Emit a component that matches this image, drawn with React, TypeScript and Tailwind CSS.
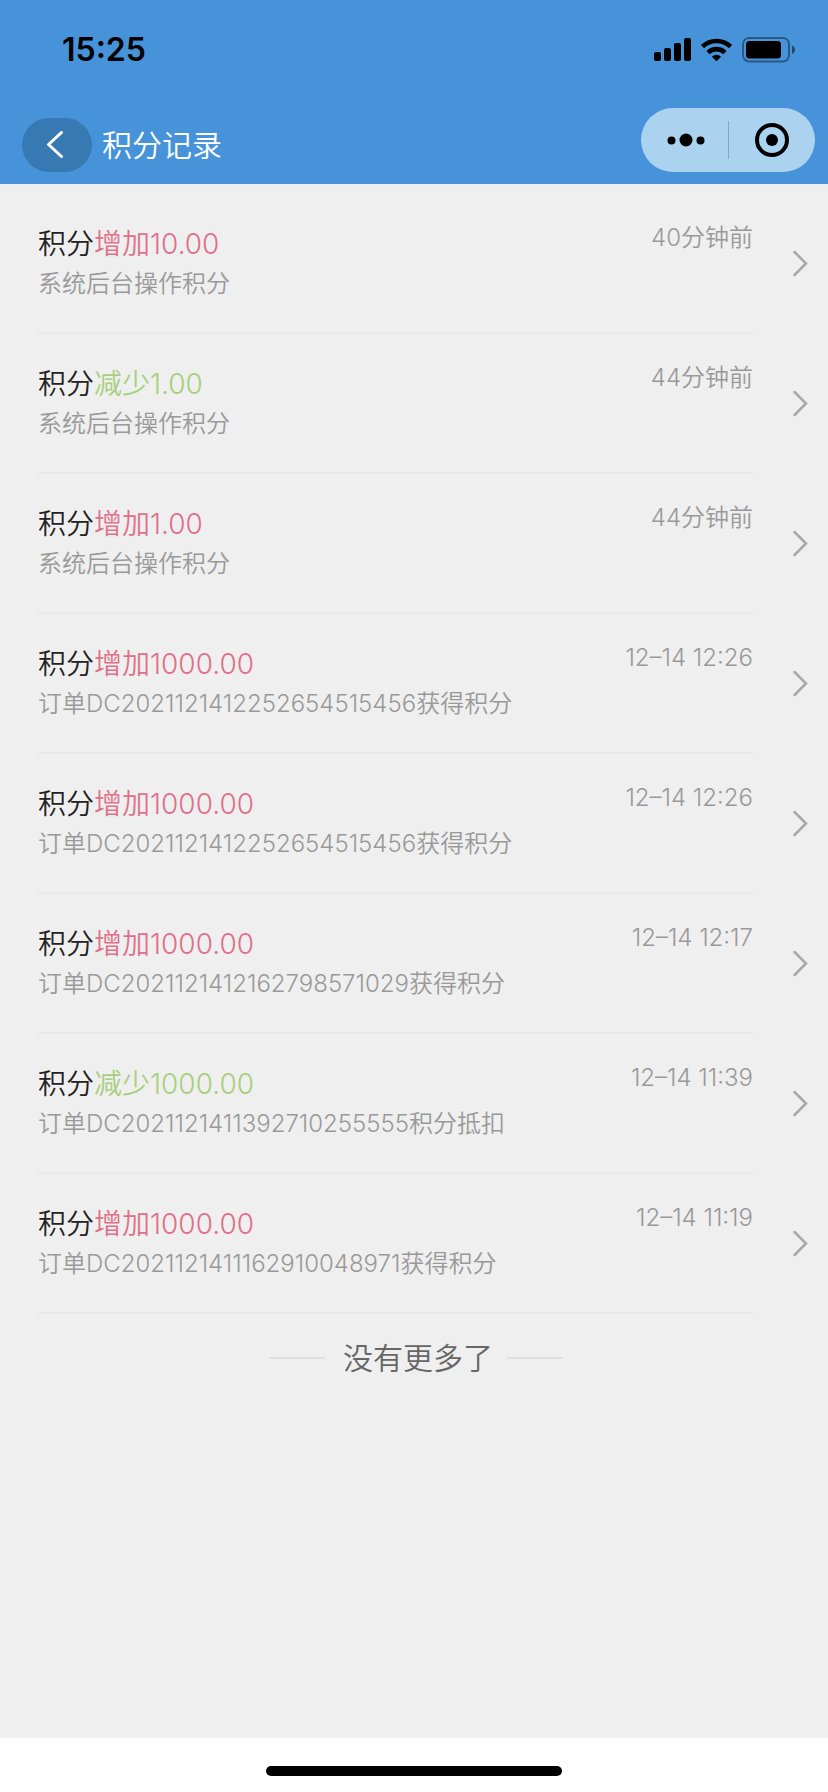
type PointRecord = {
    id: number;
    type: 'add' | 'sub';
    amount: string;
    remark: string;
    time: string;
};

const records: PointRecord[] = [
    { id: 1, type: 'add', amount: '10.00', remark: '系统后台操作积分', time: '40分钟前' },
    { id: 2, type: 'sub', amount: '1.00', remark: '系统后台操作积分', time: '44分钟前' },
    { id: 3, type: 'add', amount: '1.00', remark: '系统后台操作积分', time: '44分钟前' },
    { id: 4, type: 'add', amount: '1000.00', remark: '订单DC2021121412252654515456获得积分', time: '12–14 12:26' },
    { id: 5, type: 'add', amount: '1000.00', remark: '订单DC2021121412252654515456获得积分', time: '12–14 12:26' },
    { id: 6, type: 'add', amount: '1000.00', remark: '订单DC2021121412162798571029获得积分', time: '12–14 12:17' },
    { id: 7, type: 'sub', amount: '1000.00', remark: '订单DC2021121411392710255555积分抵扣', time: '12–14 11:39' },
    { id: 8, type: 'add', amount: '1000.00', remark: '订单DC2021121411162910048971获得积分', time: '12–14 11:19' },
];

const StatusBar = () => {
    return (
        <div className="flex h-[100px] items-center justify-between pr-[33px] pl-[62px] text-black">
            <span className="text-[32px] leading-8 font-semibold">15:25</span>
            <div className="flex items-center gap-[10px]">
                <svg width="37" height="24" viewBox="0 0 37 24" fill="currentColor">
                    <rect x="0" y="14" width="7" height="9" rx="2" />
                    <rect x="10" y="10" width="7" height="13" rx="2" />
                    <rect x="20" y="5" width="7" height="18" rx="2" />
                    <rect x="30" y="0" width="7" height="23" rx="2" />
                </svg>
                <svg width="31" height="24" viewBox="0 0 31 24" fill="none" stroke="currentColor" strokeWidth="4.6">
                    <path d="M1.5 8.6a20.3 20.3 0 0 1 28 0" />
                    <path d="M7 14.6a12.2 12.2 0 0 1 17 0" />
                    <path d="M15.5 23.2l-4.6-4.5a6.6 6.6 0 0 1 9.2 0z" fill="currentColor" stroke="none" />
                </svg>
                <svg width="53" height="26" viewBox="0 0 53 26" fill="currentColor">
                    <rect x="1" y="1" width="46" height="23.5" rx="6" fill="none" stroke="currentColor" strokeWidth="2" opacity="0.4" />
                    <rect x="4" y="4" width="35" height="17.5" rx="3.5" />
                    <path d="M50 8.5c2 .8 3 2.4 3 4.2s-1 3.4-3 4.2z" opacity="0.5" />
                </svg>
            </div>
        </div>
    );
};

const NavBar = () => {
    return (
        <div className="flex items-end justify-between pt-2 pr-[13px] pb-3 pl-[22px]">
            <div className="flex items-center gap-[10px]">
                <button type="button" aria-label="返回" className="flex h-[54px] w-[70px] items-center justify-center rounded-full bg-[#3679b3]">
                    <svg className="mr-4 ml-3" width="18" height="28" viewBox="0 0 18 28" fill="none" stroke="white" strokeWidth="3" strokeLinecap="round" strokeLinejoin="round">
                        <path d="M15.5 1.5L2.5 13.5l13 12" />
                    </svg>
                </button>
                <h1 className="text-[30px] leading-[54px] font-[350] text-white">积分记录</h1>
            </div>

            {/* 右上角胶囊 */}
            <div className="flex h-16 w-[174px] items-center rounded-full bg-[#abd3f0]">
                <button type="button" aria-label="更多" className="flex w-1/2 items-center justify-center pl-1">
                    <svg width="38" height="14" viewBox="0 0 38 14" fill="black">
                        <circle cx="4.5" cy="7.5" r="4" />
                        <circle cx="19" cy="7" r="6.5" />
                        <circle cx="33.5" cy="7.5" r="4" />
                    </svg>
                </button>
                <div className="h-[38px] w-px bg-[#7fa9cb]" />
                <button type="button" aria-label="关闭" className="flex w-1/2 items-center justify-center">
                    <svg width="36" height="36" viewBox="0 0 36 36">
                        <circle cx="18" cy="18" r="15" fill="none" stroke="black" strokeWidth="4" />
                        <circle cx="18" cy="18" r="6" fill="black" />
                    </svg>
                </button>
            </div>
        </div>
    );
};

const RecordItem = ({ record }: { record: PointRecord }) => {
    const isAdd = record.type === 'add';

    return (
        <li>
            <a href="#" className="flex items-center pr-[19px] pl-[38px]">
                <div className="flex h-[140px] min-w-0 flex-1 items-start justify-between border-b-2 border-[#e8e8e8] pt-[30px]">
                    <div>
                        <p className="text-[28px] leading-10 font-[350] text-[#222222]">
                            积分
                            <span className={isAdd ? 'text-[#e0708a]' : 'text-[#a6d07c]'}>
                                {isAdd ? '增加' : '减少'}
                                {record.amount}
                            </span>
                        </p>
                        <p className="text-2xl leading-10 font-[350] text-[#999999]">{record.remark}</p>
                    </div>
                    <span className="text-2xl leading-7 font-[350] text-[#999999]">{record.time}</span>
                </div>
                <svg className="ml-[38px]" width="18" height="28" viewBox="0 0 18 28" fill="none" stroke="#a8a8a8" strokeWidth="2.5" strokeLinecap="round">
                    <path d="M3.5 2L15 13.5 3.5 25" />
                </svg>
            </a>
        </li>
    );
};

export default function App() {
    return (
        <div className="flex min-h-screen flex-col bg-white font-['Inter','Noto_Sans_CJK_SC',sans-serif]">
            <header className="bg-[#4693da]">
                <StatusBar />
                <NavBar />
            </header>

            <main className="flex-1 bg-[#efefef] pt-[10px]">
                <ul>
                    {records.map((record) => (
                        <RecordItem key={record.id} record={record} />
                    ))}
                </ul>

                <div className="flex items-center justify-center gap-[14px] py-5 pl-1">
                    <div className="h-[2px] w-14 bg-[#e0e0e0]" />
                    <p className="pl-1 text-[30px] leading-12 font-[350] text-[#666666]">没有更多了</p>
                    <div className="h-[2px] w-14 bg-[#e0e0e0]" />
                </div>
            </main>

            {/* Home indicator */}
            <footer className="flex h-[54px] items-end justify-center pb-4">
                <div className="h-[10px] w-[296px] rounded-full bg-black" />
            </footer>
        </div>
    );
}
